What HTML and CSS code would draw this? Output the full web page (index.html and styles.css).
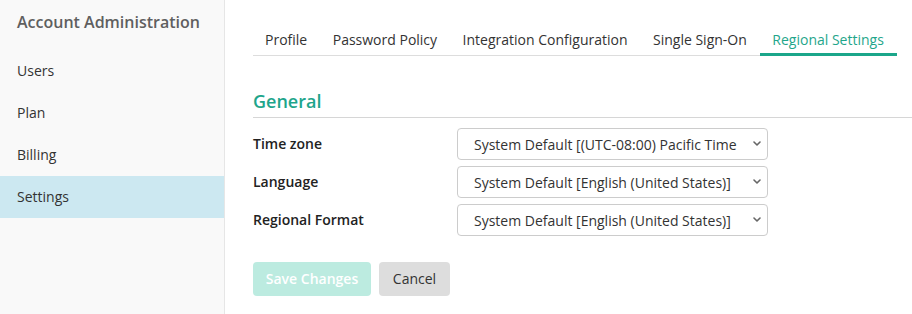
FILE: index.html
```html
<!DOCTYPE html>
<html>
<head>
<meta charset="utf-8">
<link rel="stylesheet" href="styles.css">
</head>
<body>
<div class="app">
  <aside class="sidebar">
    <div class="side-title">Account Administration</div>
    <nav class="side-nav">
      <a class="side-item">Users</a>
      <a class="side-item">Plan</a>
      <a class="side-item">Billing</a>
      <a class="side-item active">Settings</a>
    </nav>
  </aside>
  <main class="content">
    <div class="tabs">
      <span class="tab">Profile</span>
      <span class="tab">Password Policy</span>
      <span class="tab">Integration Configuration</span>
      <span class="tab">Single Sign-On</span>
      <span class="tab active">Regional Settings</span>
    </div>
    <h2 class="section-title">General</h2>
    <div class="form">
      <div class="row">
        <label class="label">Time zone</label>
        <div class="select-wrap">
          <select class="select"><option>System Default [(UTC-08:00) Pacific Time (US &amp; Canada)]</option></select>
          <svg class="chev" width="8" height="5" viewBox="0 0 8 5"><path d="M1 1 L4 4 L7 1" fill="none" stroke="#666" stroke-width="1.6" stroke-linecap="round" stroke-linejoin="round"/></svg>
        </div>
      </div>
      <div class="row">
        <label class="label">Language</label>
        <div class="select-wrap">
          <select class="select"><option>System Default [English (United States)]</option></select>
          <svg class="chev" width="8" height="5" viewBox="0 0 8 5"><path d="M1 1 L4 4 L7 1" fill="none" stroke="#666" stroke-width="1.6" stroke-linecap="round" stroke-linejoin="round"/></svg>
        </div>
      </div>
      <div class="row">
        <label class="label">Regional Format</label>
        <div class="select-wrap">
          <select class="select"><option>System Default [English (United States)]</option></select>
          <svg class="chev" width="8" height="5" viewBox="0 0 8 5"><path d="M1 1 L4 4 L7 1" fill="none" stroke="#666" stroke-width="1.6" stroke-linecap="round" stroke-linejoin="round"/></svg>
        </div>
      </div>
    </div>
    <div class="actions">
      <button class="btn btn-save">Save Changes</button>
      <button class="btn btn-cancel">Cancel</button>
    </div>
  </main>
</div>
</body>
</html>
```
FILE: styles.css
```css
* { box-sizing: border-box; }
html, body { margin: 0; padding: 0; background: #fff; }
body {
  font-family: "Open Sans", "Liberation Sans", sans-serif;
  font-size: 14px;
  color: #333;
  width: 912px;
  height: 314px;
  overflow: hidden;
}
.app { display: flex; height: 314px; }
.sidebar {
  width: 225px;
  flex: none;
  background: #f9f9f9;
  border-right: 1px solid #e6e6e6;
}
.side-title {
  height: 50px;
  padding: 11px 0 0 17px;
  font-size: 16px;
  font-weight: 600;
  color: #5f5f5f;
  line-height: 22px;
}
.side-nav { display: flex; flex-direction: column; }
.side-item {
  display: block;
  height: 42px;
  line-height: 42px;
  padding-left: 17px;
  color: #333;
  font-size: 14px;
}
.side-item.active { background: #cce8f1; }
.content {
  flex: 1;
  padding: 20px 0 0 28px;
  display: flex;
  flex-direction: column;
  align-items: flex-start;
}
.tabs {
  display: flex;
  border-bottom: 1px solid #ddd;
}
.tab {
  padding: 10px 13.5px 4px 12px;
  line-height: 19px;
  border-bottom: 3px solid transparent;
  margin-bottom: -1px;
  color: #333;
  white-space: nowrap;
}
.tab.active { color: #1fa68b; border-bottom-color: #1ba68a; }
.section-title {
  align-self: stretch;
  margin: 33px 0 0 0;
  padding-bottom: 4px;
  font-size: 18px;
  line-height: 24px;
  font-weight: 600;
  color: #1ea58b;
  border-bottom: 1px solid #d6d6d6;
}
.form {
  margin-top: 10px;
  display: flex;
  flex-direction: column;
  gap: 6px;
}
.row { display: flex; align-items: center; }
.label {
  width: 204px;
  font-weight: 600;
  color: #222;
  line-height: 19px;
  margin-top: -2px;
}
.select-wrap { position: relative; width: 311px; height: 32px; }
.select {
  appearance: none;
  -webkit-appearance: none;
  width: 100%;
  height: 32px;
  border: 1px solid #ccc;
  border-radius: 4px;
  background: #fff;
  padding: 0 30px 0 16px;
  font-family: inherit;
  font-size: 14px;
  color: #333;
}
.chev {
  position: absolute;
  right: 7px;
  top: 13px;
  pointer-events: none;
}
.actions { margin-top: 26px; display: flex; gap: 8px; }
.btn {
  height: 34px;
  border: none;
  border-radius: 4px;
  padding: 0 12px 2px;
  font-family: inherit;
  font-size: 14px;
}
.btn-save { background: #bcebe0; color: #fff; font-weight: 600; width: 118px; }
.btn-cancel { background: #dddddd; color: #333; width: 71px; }
```
